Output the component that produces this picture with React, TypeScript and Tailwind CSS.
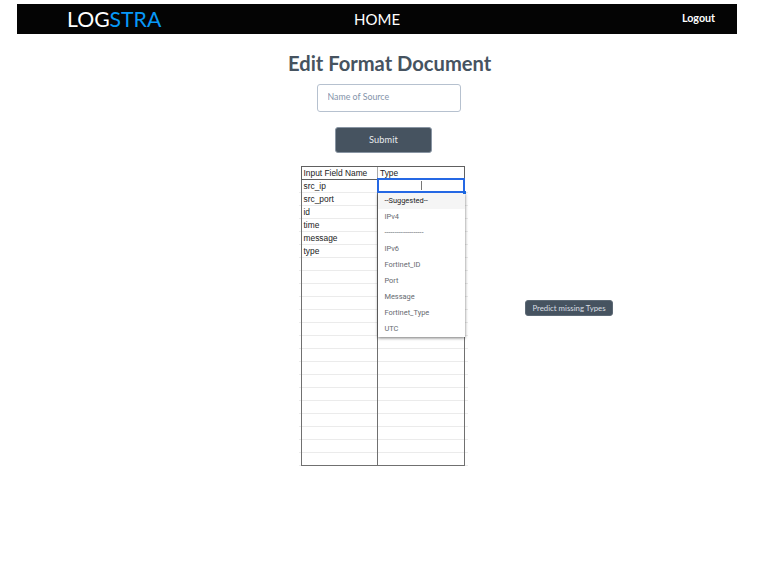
const fields = ["src_ip", "src_port", "id", "time", "message", "type"];
const rows = Array.from({ length: 22 }, (_, i) => fields[i] ?? "");
const options = ["IPv4", "-------------------", "IPv6", "Fortinet_ID", "Port", "Message", "Fortinet_Type", "UTC"];

function Header() {
  return (
    <header className="ml-[17px] flex h-[30px] w-[720px] bg-[#040404] text-white">
      <div className="ml-[50px] w-[287px] text-[21.2px] leading-[31px]">
        LOG<span className="text-[#0798f8]">STRA</span>
      </div>
      <a className="w-[328px] text-[15px] leading-[31px]">HOME</a>
      <a className="text-[10.7px] leading-[28px] font-bold">Logout</a>
    </header>
  );
}

function TypeMenu() {
  return (
    <ul className="absolute top-[13px] left-0 z-10 h-[144px] w-[87px] bg-white font-['Roboto',sans-serif] text-[7.45px] leading-4 text-[#666a70] shadow-[0_1px_3px_rgba(0,0,0,0.55)]">
      <li className="bg-[#f5f5f5] pl-[6.4px] text-[#222]">--Suggested--</li>
      {options.map((option) => (
        <li key={option} className="pl-[6.4px] whitespace-nowrap">{option}</li>
      ))}
    </ul>
  );
}

function FieldTable() {
  return (
    <div className="w-[169px] font-['Liberation_Sans',sans-serif] text-[8.4px] leading-[12px] text-[#222]">
      <div className="mx-[2px] flex h-[14px] w-[164px] border-y border-[#606060]">
        <div className="w-[76px] border-l border-[#606060] pl-[1.5px] leading-[13px]">Input Field Name</div>
        <div className="w-[88px] border-x border-[#aaa] border-r-[#606060] pl-[2px] leading-[13px]">Type</div>
      </div>
      {rows.map((name, i) => (
        <div key={i} className="flex h-[13px]">
          <div className="w-[2px] shadow-[inset_0_-1px_#ebebeb]" />
          <div className={`w-[76px] border-l border-[#707070] pl-[1.5px] ${i === 21 ? "shadow-[inset_0_-1px_#707070]" : "shadow-[inset_0_-1px_#ebebeb]"}`}>{name}</div>
          <div className={`relative w-[88px] border-x border-[#707070] ${i === 21 ? "shadow-[inset_0_-1px_#707070]" : "shadow-[inset_0_-1px_#ebebeb]"}`}>
            {i === 0 && (
              <>
                <div className="absolute -top-[2px] -left-[1px] z-20 flex h-[15px] w-[88px] justify-center border-2 border-[#2568e4] bg-white pt-[1px]">
                  <span className="h-[9px] w-px bg-[#777]" />
                  <i className="absolute -right-[3px] -bottom-[3px] size-[3px] bg-[#1a67df]" />
                </div>
                <TypeMenu />
              </>
            )}
          </div>
          <div className="w-[3px] shadow-[inset_0_-1px_#ebebeb]" />
        </div>
      ))}
    </div>
  );
}

export default function App() {
  return (
    <div className="h-[571px] w-[758px] overflow-hidden bg-white pt-1 font-['Lato',sans-serif]">
      <Header />
      <main>
        <h1 className="mt-[14px] ml-[288px] h-[36px] text-[20.15px] leading-[30px] font-bold whitespace-nowrap text-[#465360]">Edit Format Document</h1>
        <form className="flex flex-col">
          <input
            placeholder="Name of Source"
            className="ml-[317px] h-[28px] w-[144px] rounded-[3px] border border-[#b6c1cf] px-[9.5px] pb-[4px] text-[8.8px] placeholder:text-[#8493aa]"
          />
          <button type="button" className="mt-[15px] ml-[335px] h-[26px] w-[97px] rounded-[3px] border border-[#8995a3] bg-[#465360] pb-px text-[9.2px] tracking-[0.15px] text-[#e8ebee]">
            Submit
          </button>
        </form>
        <section className="mt-[13px] ml-[299px] flex items-start">
          <FieldTable />
          <button type="button" className="mt-[134px] ml-[57px] h-[16px] w-[88px] rounded-[3px] border border-[#5d6975] bg-[#465360] text-[7.8px] leading-[14px] whitespace-nowrap text-[#d9dee3]">
            Predict missing Types
          </button>
        </section>
      </main>
    </div>
  );
}
